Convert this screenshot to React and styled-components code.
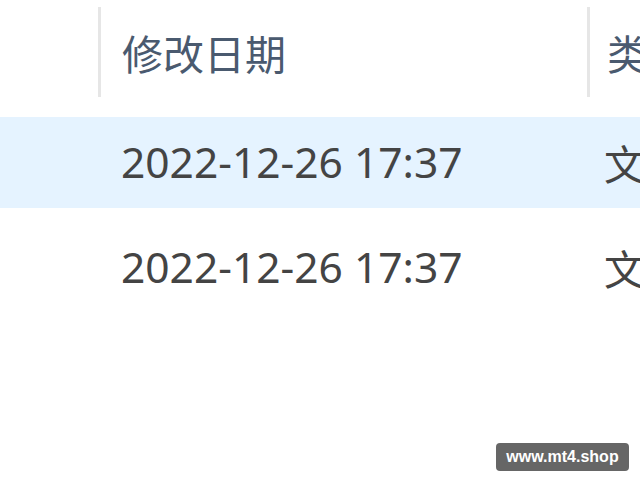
import styled, { createGlobalStyle } from "styled-components";

const GlobalStyle = createGlobalStyle`
  html, body {
    margin: 0;
    padding: 0;
    background: #ffffff;
  }
  body {
    font-family: "Noto Sans", "Noto Sans CJK SC", sans-serif;
  }
`;

const Window = styled.div`
  position: relative;
  width: 640px;
  height: 480px;
  overflow: hidden;
  background: #ffffff;
`;

const Header = styled.div`
  display: flex;
  padding-top: 7px;
  margin-bottom: 20px;
  white-space: nowrap;
`;

const Spacer = styled.div`
  flex: 0 0 ${(p) => p.$width}px;
`;

const HeaderCell = styled.div`
  flex: 0 0 ${(p) => (p.$width ? `${p.$width}px` : "auto")};
  box-sizing: border-box;
  height: 90px;
  display: flex;
  align-items: center;
  padding-left: ${(p) => p.$pad}px;
  border-left: 3px solid #e6e6e6;
  font-family: "Noto Sans CJK SC", sans-serif;
  font-size: 41px;
  line-height: 1;
  color: #4a5a6f;
`;

const Rows = styled.div`
  display: flex;
  flex-direction: column;
  gap: 14px;
`;

const Row = styled.div`
  display: flex;
  height: 91px;
  align-items: center;
  white-space: nowrap;
  background: ${(p) => (p.$selected ? "#e5f3ff" : "transparent")};
`;

const Cell = styled.div`
  flex: 0 0 ${(p) => (p.$width ? `${p.$width}px` : "auto")};
  box-sizing: border-box;
  padding-left: ${(p) => p.$pad}px;
  font-family: ${(p) =>
    p.$cjk ? `"Noto Sans CJK SC", sans-serif` : `"Noto Sans", sans-serif`};
  font-size: ${(p) => (p.$cjk ? 41 : 42.5)}px;
  line-height: 1;
  color: #444444;
`;

const Watermark = styled.div`
  position: absolute;
  right: 11px;
  bottom: 9px;
  width: 133px;
  height: 28px;
  border-radius: 4px;
  background: #666666;
  color: #ffffff;
  font-family: "Liberation Sans", Arial, sans-serif;
  font-weight: 700;
  font-size: 16px;
  display: flex;
  align-items: center;
  justify-content: center;
`;

const files = [
  { date: "2022-12-26 17:37", type: "文件夹", selected: true },
  { date: "2022-12-26 17:37", type: "文件夹", selected: false },
];

const App = () => {
  return (
    <Window>
      <GlobalStyle />
      <Header>
        <Spacer $width={98} />
        <HeaderCell $width={489} $pad={21}>修改日期</HeaderCell>
        <HeaderCell $pad={17}>类型</HeaderCell>
      </Header>
      <Rows>
        {files.map((f, i) => (
          <Row key={i} $selected={f.selected}>
            <Spacer $width={101} />
            <Cell $width={486} $pad={20}>
              {f.date}
            </Cell>
            <Cell $pad={17} $cjk>
              {f.type}
            </Cell>
          </Row>
        ))}
      </Rows>
      <Watermark>www.mt4.shop</Watermark>
    </Window>
  );
};

export default App;
